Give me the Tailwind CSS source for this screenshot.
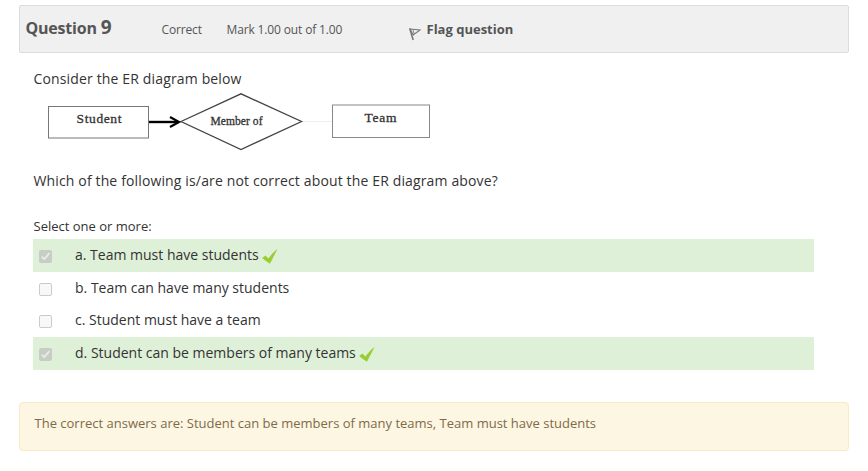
<!DOCTYPE html>
<html lang="en">
<head>
<meta charset="utf-8">
<title>Question 9</title>
<script src="https://cdn.jsdelivr.net/npm/@tailwindcss/browser@4"></script>
</head>
<body class="bg-white font-['Open_Sans',sans-serif] text-[#333]">
<main class="flex h-[471px] w-[868px] flex-col overflow-hidden pl-[19px] pr-[19px] pt-[5px]">
  <header class="flex h-12 items-start rounded-[2px] border border-[#dcdcdc] bg-[#f0f0f0] pl-[5.5px] text-[12px] leading-[18px] text-[#555]">
    <h3 class="mt-[8px] flex w-[136px] items-baseline gap-[4px] text-[16px] leading-[26px] font-bold tracking-[-0.2px] whitespace-nowrap"><span>Question</span><span class="text-[19px]">9</span></h3>
    <div class="mt-[15px] w-[65px] tracking-[-0.14px]">Correct</div>
    <div class="mt-[15px] w-[182.5px] tracking-[-0.14px]">Mark 1.00 out of 1.00</div>
    <svg class="mt-[21px] h-[14px] w-[12px]" viewBox="0 0 12 14" fill="none" stroke="#777"><path d="M.8 1.5 4.2 13" stroke-width="1.6"/><path d="M1 2 11 3 4.2 8Z" stroke-width="1.1"/><path d="M4 3 5.2 7" stroke-width=".9"/></svg>
    <div class="mt-[13px] ml-[5.5px] text-[13px] leading-5 font-bold">Flag question</div>
  </header>
  <section class="flex h-[349px] flex-col pl-[14px] text-[14px] leading-5">
    <p class="mt-[16px] ml-[0.5px] tracking-[0.15px]">Consider the ER diagram below</p>
    <svg class="mt-[2px] ml-[13px] h-[62px] w-[386px]" viewBox="46 91 386 62" fill="none">
      <rect x="48.5" y="106.5" width="100" height="31.5" stroke="#777"/>
      <rect x="332.5" y="105" width="97" height="32.5" stroke="#888"/>
      <path d="M302 121.5h30" stroke="#eee"/>
      <path d="M181 121.5 241 93.8 301.5 121.5 241 149.5Z" stroke="#444" stroke-width="1.3"/>
      <path d="M149 122H178" stroke="#000" stroke-width="2.4"/>
      <path d="M170 117 179 122 170 127" stroke="#000" stroke-width="2.2"/>
      <g fill="#333" stroke="#333" stroke-width=".3" font-family="Liberation Serif, serif">
        <text x="76.5" y="123" font-size="13.5" textLength="45">Student</text>
        <text x="210.5" y="125" font-size="11.5" textLength="52">Member of</text>
        <text x="364.5" y="122" font-size="13.5" textLength="32">Team</text>
      </g>
    </svg>
    <p class="mt-[18px] ml-[0.5px] tracking-[0.14px]">Which of the following is/are not correct about the ER diagram above?</p>
    <p class="mt-[25px] ml-[0.5px] text-[13px]">Select one or more:</p>
    <div class="mt-[3px] flex w-[781px] flex-col">
      <label class="flex h-[33px] items-start bg-[#dff0d8] pt-[6px] pl-[6px]">
        <svg class="mt-[5px] mr-[23px] h-[13px] w-[13px]" viewBox="0 0 13 13"><rect width="13" height="13" rx="2" fill="#c7cdc5"/><path d="M2.8 6.6 5.3 9.1 10.4 3.2" fill="none" stroke="#e6ece4" stroke-width="2"/></svg>
        <span>a. Team must have students</span>
        <svg class="mt-[4px] ml-[3px] h-[15px] w-[16px]" viewBox="0 0 16 15" fill="#9acd32"><path d="M.2 9 3.5 6.6 6.3 9.5C9 6 12 2.5 15.5 0C13.5 4 11 9 8 14.7C5.5 13.4 3 11.3 .2 9Z"/></svg>
      </label>
      <label class="flex h-[32px] items-start pt-[6px] pl-[6px]">
        <span class="mt-[5px] mr-[23px] h-[13px] w-[13px] rounded-[2px] border border-[#cbcbcb] bg-[#f8f8f8]"></span>
        <span>b. Team can have many students</span>
      </label>
      <label class="flex h-[33px] items-start pt-[6px] pl-[6px]">
        <span class="mt-[5px] mr-[23px] h-[13px] w-[13px] rounded-[2px] border border-[#cbcbcb] bg-[#f8f8f8]"></span>
        <span>c. Student must have a team</span>
      </label>
      <label class="flex h-[33px] items-start bg-[#dff0d8] pt-[6px] pl-[6px]">
        <svg class="mt-[5px] mr-[23px] h-[13px] w-[13px]" viewBox="0 0 13 13"><rect width="13" height="13" rx="2" fill="#c7cdc5"/><path d="M2.8 6.6 5.3 9.1 10.4 3.2" fill="none" stroke="#e6ece4" stroke-width="2"/></svg>
        <span>d. Student can be members of many teams</span>
        <svg class="mt-[4px] ml-[3px] h-[15px] w-[16px]" viewBox="0 0 16 15" fill="#9acd32"><path d="M.2 9 3.5 6.6 6.3 9.5C9 6 12 2.5 15.5 0C13.5 4 11 9 8 14.7C5.5 13.4 3 11.3 .2 9Z"/></svg>
      </label>
    </div>
  </section>
  <section class="h-[49px] rounded-[4px] border border-[#fbe8c5] bg-[#fdf6e3] pt-[10px] pl-[14.5px] text-[13px] leading-5 text-[#7d6b48]">The correct answers are: Student can be members of many teams, Team must have students</section>
</main>
</body>
</html>
